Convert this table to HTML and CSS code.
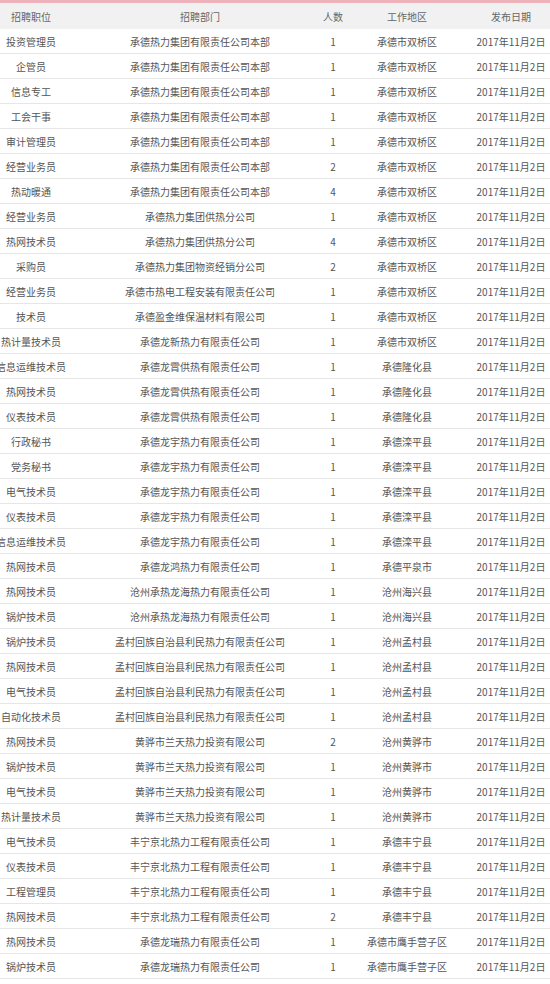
FILE: index.html
```html
<!DOCTYPE html>
<html lang="zh-CN">
<head>
<meta charset="utf-8">
<title>招聘信息</title>
<link rel="stylesheet" href="styles.css">
</head>
<body>
<div class="table">
  <div class="row head">
    <div class="c c1">招聘职位</div><div class="c c2">招聘部门</div><div class="c c3">人数</div><div class="c c4">工作地区</div><div class="c c5">发布日期</div>
  </div>
  <div class="row"><div class="c c1">投资管理员</div><div class="c c2">承德热力集团有限责任公司本部</div><div class="c c3">1</div><div class="c c4">承德市双桥区</div><div class="c c5">2017年11月2日</div></div>
  <div class="row"><div class="c c1">企管员</div><div class="c c2">承德热力集团有限责任公司本部</div><div class="c c3">1</div><div class="c c4">承德市双桥区</div><div class="c c5">2017年11月2日</div></div>
  <div class="row"><div class="c c1">信息专工</div><div class="c c2">承德热力集团有限责任公司本部</div><div class="c c3">1</div><div class="c c4">承德市双桥区</div><div class="c c5">2017年11月2日</div></div>
  <div class="row"><div class="c c1">工会干事</div><div class="c c2">承德热力集团有限责任公司本部</div><div class="c c3">1</div><div class="c c4">承德市双桥区</div><div class="c c5">2017年11月2日</div></div>
  <div class="row"><div class="c c1">审计管理员</div><div class="c c2">承德热力集团有限责任公司本部</div><div class="c c3">1</div><div class="c c4">承德市双桥区</div><div class="c c5">2017年11月2日</div></div>
  <div class="row"><div class="c c1">经营业务员</div><div class="c c2">承德热力集团有限责任公司本部</div><div class="c c3">2</div><div class="c c4">承德市双桥区</div><div class="c c5">2017年11月2日</div></div>
  <div class="row"><div class="c c1">热动暖通</div><div class="c c2">承德热力集团有限责任公司本部</div><div class="c c3">4</div><div class="c c4">承德市双桥区</div><div class="c c5">2017年11月2日</div></div>
  <div class="row"><div class="c c1">经营业务员</div><div class="c c2">承德热力集团供热分公司</div><div class="c c3">1</div><div class="c c4">承德市双桥区</div><div class="c c5">2017年11月2日</div></div>
  <div class="row"><div class="c c1">热网技术员</div><div class="c c2">承德热力集团供热分公司</div><div class="c c3">4</div><div class="c c4">承德市双桥区</div><div class="c c5">2017年11月2日</div></div>
  <div class="row"><div class="c c1">采购员</div><div class="c c2">承德热力集团物资经销分公司</div><div class="c c3">2</div><div class="c c4">承德市双桥区</div><div class="c c5">2017年11月2日</div></div>
  <div class="row"><div class="c c1">经营业务员</div><div class="c c2">承德市热电工程安装有限责任公司</div><div class="c c3">1</div><div class="c c4">承德市双桥区</div><div class="c c5">2017年11月2日</div></div>
  <div class="row"><div class="c c1">技术员</div><div class="c c2">承德盈金维保温材料有限公司</div><div class="c c3">1</div><div class="c c4">承德市双桥区</div><div class="c c5">2017年11月2日</div></div>
  <div class="row"><div class="c c1">热计量技术员</div><div class="c c2">承德龙新热力有限责任公司</div><div class="c c3">1</div><div class="c c4">承德市双桥区</div><div class="c c5">2017年11月2日</div></div>
  <div class="row"><div class="c c1">信息运维技术员</div><div class="c c2">承德龙霄供热有限责任公司</div><div class="c c3">1</div><div class="c c4">承德隆化县</div><div class="c c5">2017年11月2日</div></div>
  <div class="row"><div class="c c1">热网技术员</div><div class="c c2">承德龙霄供热有限责任公司</div><div class="c c3">1</div><div class="c c4">承德隆化县</div><div class="c c5">2017年11月2日</div></div>
  <div class="row"><div class="c c1">仪表技术员</div><div class="c c2">承德龙霄供热有限责任公司</div><div class="c c3">1</div><div class="c c4">承德隆化县</div><div class="c c5">2017年11月2日</div></div>
  <div class="row"><div class="c c1">行政秘书</div><div class="c c2">承德龙宇热力有限责任公司</div><div class="c c3">1</div><div class="c c4">承德滦平县</div><div class="c c5">2017年11月2日</div></div>
  <div class="row"><div class="c c1">党务秘书</div><div class="c c2">承德龙宇热力有限责任公司</div><div class="c c3">1</div><div class="c c4">承德滦平县</div><div class="c c5">2017年11月2日</div></div>
  <div class="row"><div class="c c1">电气技术员</div><div class="c c2">承德龙宇热力有限责任公司</div><div class="c c3">1</div><div class="c c4">承德滦平县</div><div class="c c5">2017年11月2日</div></div>
  <div class="row"><div class="c c1">仪表技术员</div><div class="c c2">承德龙宇热力有限责任公司</div><div class="c c3">1</div><div class="c c4">承德滦平县</div><div class="c c5">2017年11月2日</div></div>
  <div class="row"><div class="c c1">信息运维技术员</div><div class="c c2">承德龙宇热力有限责任公司</div><div class="c c3">1</div><div class="c c4">承德滦平县</div><div class="c c5">2017年11月2日</div></div>
  <div class="row"><div class="c c1">热网技术员</div><div class="c c2">承德龙鸿热力有限责任公司</div><div class="c c3">1</div><div class="c c4">承德平泉市</div><div class="c c5">2017年11月2日</div></div>
  <div class="row"><div class="c c1">热网技术员</div><div class="c c2">沧州承热龙海热力有限责任公司</div><div class="c c3">1</div><div class="c c4">沧州海兴县</div><div class="c c5">2017年11月2日</div></div>
  <div class="row"><div class="c c1">锅炉技术员</div><div class="c c2">沧州承热龙海热力有限责任公司</div><div class="c c3">1</div><div class="c c4">沧州海兴县</div><div class="c c5">2017年11月2日</div></div>
  <div class="row"><div class="c c1">锅炉技术员</div><div class="c c2">孟村回族自治县利民热力有限责任公司</div><div class="c c3">1</div><div class="c c4">沧州孟村县</div><div class="c c5">2017年11月2日</div></div>
  <div class="row"><div class="c c1">热网技术员</div><div class="c c2">孟村回族自治县利民热力有限责任公司</div><div class="c c3">1</div><div class="c c4">沧州孟村县</div><div class="c c5">2017年11月2日</div></div>
  <div class="row"><div class="c c1">电气技术员</div><div class="c c2">孟村回族自治县利民热力有限责任公司</div><div class="c c3">1</div><div class="c c4">沧州孟村县</div><div class="c c5">2017年11月2日</div></div>
  <div class="row"><div class="c c1">自动化技术员</div><div class="c c2">孟村回族自治县利民热力有限责任公司</div><div class="c c3">1</div><div class="c c4">沧州孟村县</div><div class="c c5">2017年11月2日</div></div>
  <div class="row"><div class="c c1">热网技术员</div><div class="c c2">黄骅市兰天热力投资有限公司</div><div class="c c3">2</div><div class="c c4">沧州黄骅市</div><div class="c c5">2017年11月2日</div></div>
  <div class="row"><div class="c c1">锅炉技术员</div><div class="c c2">黄骅市兰天热力投资有限公司</div><div class="c c3">1</div><div class="c c4">沧州黄骅市</div><div class="c c5">2017年11月2日</div></div>
  <div class="row"><div class="c c1">电气技术员</div><div class="c c2">黄骅市兰天热力投资有限公司</div><div class="c c3">1</div><div class="c c4">沧州黄骅市</div><div class="c c5">2017年11月2日</div></div>
  <div class="row"><div class="c c1">热计量技术员</div><div class="c c2">黄骅市兰天热力投资有限公司</div><div class="c c3">1</div><div class="c c4">沧州黄骅市</div><div class="c c5">2017年11月2日</div></div>
  <div class="row"><div class="c c1">电气技术员</div><div class="c c2">丰宁京北热力工程有限责任公司</div><div class="c c3">1</div><div class="c c4">承德丰宁县</div><div class="c c5">2017年11月2日</div></div>
  <div class="row"><div class="c c1">仪表技术员</div><div class="c c2">丰宁京北热力工程有限责任公司</div><div class="c c3">1</div><div class="c c4">承德丰宁县</div><div class="c c5">2017年11月2日</div></div>
  <div class="row"><div class="c c1">工程管理员</div><div class="c c2">丰宁京北热力工程有限责任公司</div><div class="c c3">1</div><div class="c c4">承德丰宁县</div><div class="c c5">2017年11月2日</div></div>
  <div class="row"><div class="c c1">热网技术员</div><div class="c c2">丰宁京北热力工程有限责任公司</div><div class="c c3">2</div><div class="c c4">承德丰宁县</div><div class="c c5">2017年11月2日</div></div>
  <div class="row"><div class="c c1">热网技术员</div><div class="c c2">承德龙瑞热力有限责任公司</div><div class="c c3">1</div><div class="c c4">承德市鹰手营子区</div><div class="c c5">2017年11月2日</div></div>
  <div class="row"><div class="c c1">锅炉技术员</div><div class="c c2">承德龙瑞热力有限责任公司</div><div class="c c3">1</div><div class="c c4">承德市鹰手营子区</div><div class="c c5">2017年11月2日</div></div>
</div>
</body>
</html>
```

FILE: styles.css
```css
html, body {
  margin: 0;
  padding: 0;
  background: #ffffff;
}
body {
  width: 550px;
  overflow: hidden;
  font-family: "Noto Sans CJK SC", "Noto Sans", sans-serif;
  font-size: 10px;
  color: #555555;
}
.table {
  display: flex;
  flex-direction: column;
  border-top: 3px solid #eeb3ba;
}
.row {
  display: grid;
  grid-template-columns: 62px 256px 30px 118px 84px;
  height: 24px;
  border-bottom: 1px solid #e6e6e6;
}
.row.head {
  height: 26px;
  background: #f1f1f1;
  border-bottom: none;
  color: #666666;
}
.c {
  display: flex;
  justify-content: center;
  align-items: center;
  white-space: nowrap;
}
.c2 {
  padding-left: 20px;
}
.c5 {
  padding-left: 6px;
}
```
